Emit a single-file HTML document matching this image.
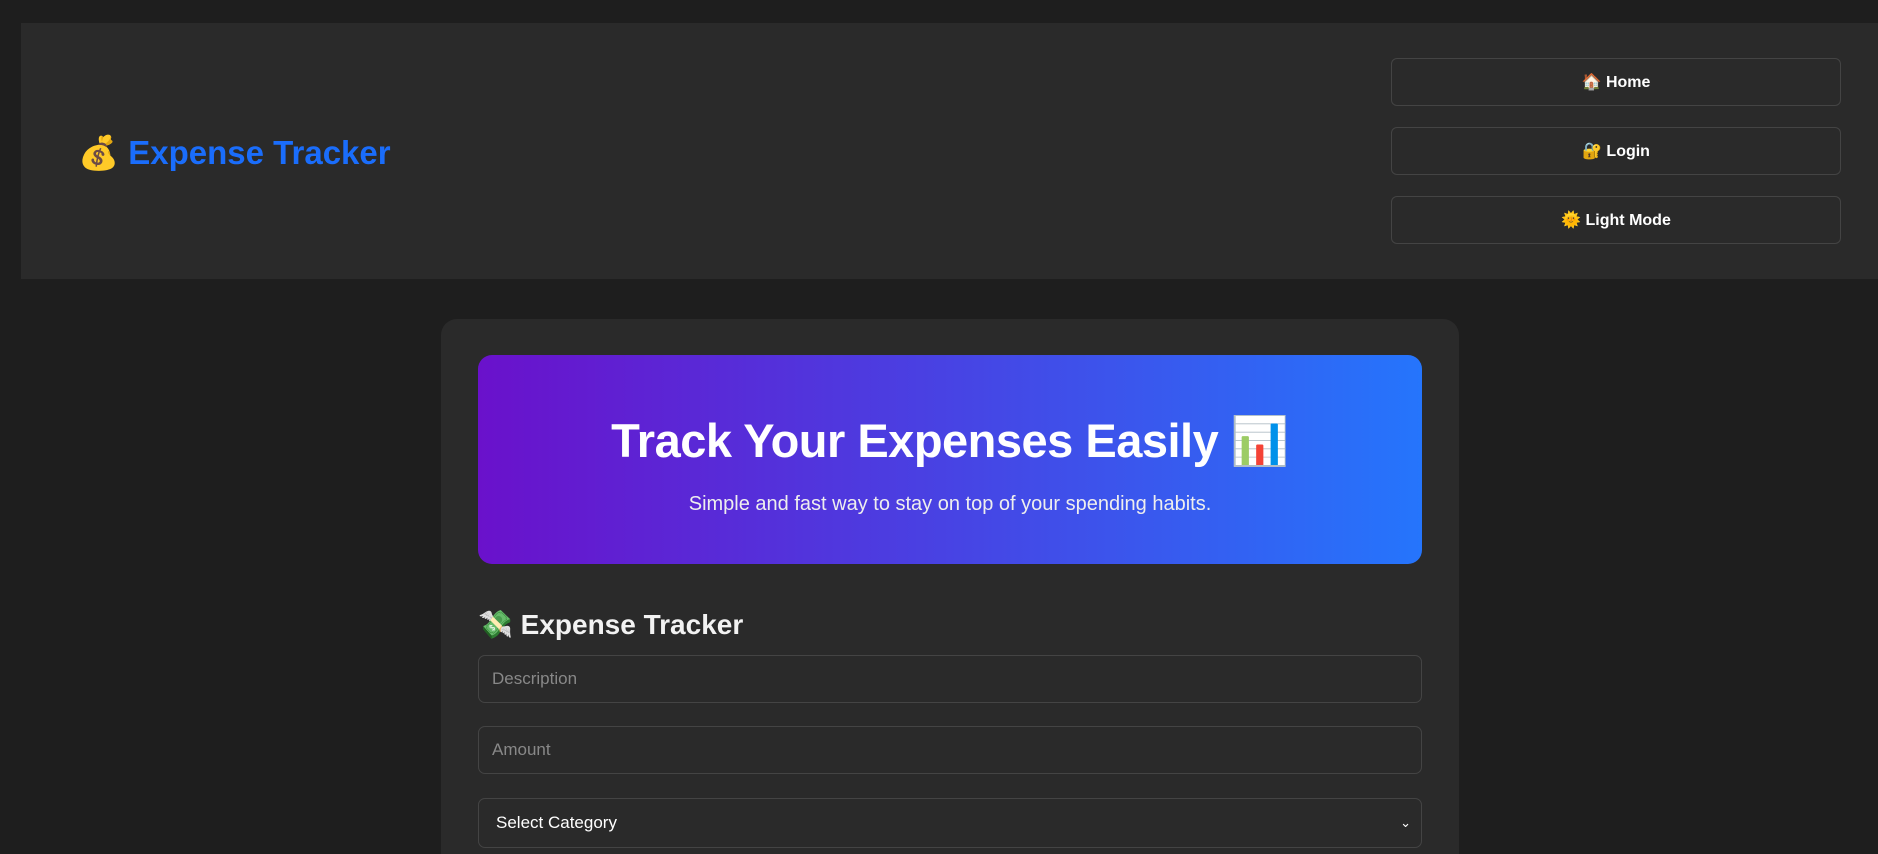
<!DOCTYPE html>
<html><head><meta charset="utf-8"><style>
*{box-sizing:border-box;margin:0;padding:0}
html,body{width:1878px;height:854px;overflow:hidden}
body{background:#1e1e1e;font-family:"Liberation Sans","Noto Sans CJK SC",sans-serif;color:#fff;position:relative}
.hdr{position:absolute;left:21px;top:23px;right:0;height:256px;background:#2a2a2a}
.logo{position:absolute;left:57px;top:111px;font-size:33px;font-weight:bold;color:#1a6dfb;white-space:nowrap}
.btn{position:absolute;left:1370px;width:450px;height:48px;border:1px solid #444;border-radius:6px;display:flex;align-items:center;justify-content:center;font-size:16px;font-weight:bold;color:#fff}
.card{position:absolute;left:441px;top:319px;width:1018px;height:535px;background:#2a2a2a;border-radius:16px 16px 0 0}
.hero{position:absolute;left:37px;top:36px;width:944px;height:209px;border-radius:14px;background:linear-gradient(90deg,#6a11cb,#2575fc);text-align:center}
.hero h1{font-size:47px;font-weight:bold;margin-top:58px;letter-spacing:-0.5px}
.hero p{font-size:20px;margin-top:24px;color:#eee}
h2{position:absolute;left:37px;top:289px;font-size:28px;font-weight:bold;color:#f2f2f2}
.inp{position:absolute;left:37px;width:944px;border:1px solid #444;border-radius:7px;display:flex;align-items:center;padding-left:13px;font-size:17px;color:#888}
</style></head><body>
<div class="hdr">
<div class="logo">💰 Expense Tracker</div>
<div class="btn" style="top:35px">🏠 Home</div>
<div class="btn" style="top:104px">🔐 Login</div>
<div class="btn" style="top:173px">🌞 Light Mode</div>
</div>
<div class="card">
<div class="hero"><h1>Track Your Expenses Easily 📊</h1><p>Simple and fast way to stay on top of your spending habits.</p></div>
<h2>💸 Expense Tracker</h2>
<div class="inp" style="top:336px;height:48px">Description</div>
<div class="inp" style="top:407px;height:48px">Amount</div>
<div class="inp" style="top:479px;height:50px;color:#fff;padding-left:17px">Select Category<span style="position:absolute;right:10px;font-size:13px">&#8964;</span></div>
</div>
</body></html>
